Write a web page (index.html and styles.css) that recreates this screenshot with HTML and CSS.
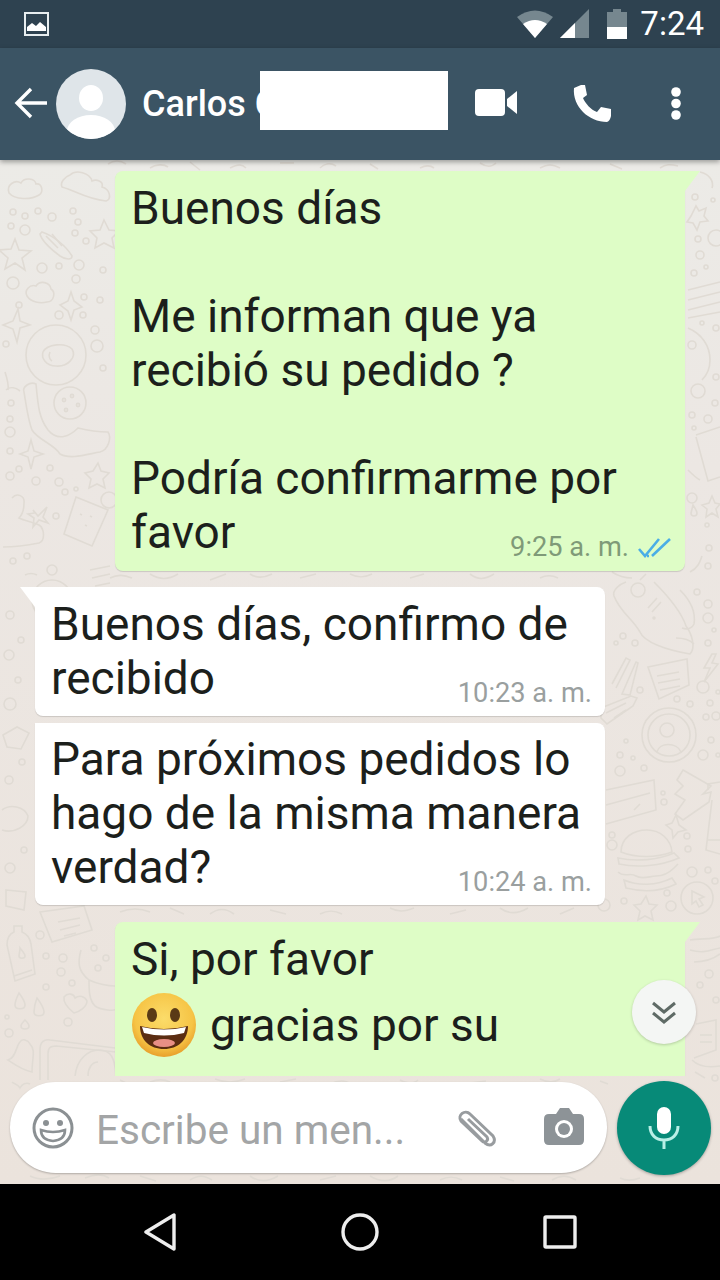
FILE: index.html
```html
<!DOCTYPE html>
<html lang="es">
<head>
<meta charset="utf-8">
<title>Chat</title>
<link rel="stylesheet" href="styles.css">
</head>
<body>
<div class="app">
  <div class="status">
    <svg class="st-img" width="25" height="24" viewBox="0 0 25 24"><rect x="1" y="1" width="23" height="22" fill="none" stroke="#e8eef0" stroke-width="2"/><path d="M3 19v-4l5-4 4 3 4-4 6 5v4z" fill="#fff"/></svg>
    <div class="st-right">
      <svg class="st-wifi" width="36" height="28" viewBox="0 0 36 28"><path d="M18 28 0 7Q18-6 36 7z" fill="#76878f"/><path d="M18 28 6 14Q18 6 30 14z" fill="#fff"/></svg>
      <svg width="30" height="30" viewBox="0 0 30 30"><path d="M0 29 29 0v29z" fill="#76878f"/><path d="M0 29 15 14v15z" fill="#fff"/></svg>
      <svg class="st-bat" width="20" height="30" viewBox="0 0 20 30"><path d="M0 3h6V0h8v3h6v27H0z" fill="#76878f"/><path d="M0 18h20v12H0z" fill="#fff"/></svg>
      <span class="clock">7:24</span>
    </div>
  </div>

  <header class="bar">
    <svg class="back" width="34" height="32" viewBox="0 0 34 32"><path d="M33 16H3M17 2 3 16l14 14" fill="none" stroke="#fff" stroke-width="3.4"/></svg>
    <svg class="avatar" width="70" height="70" viewBox="0 0 70 70"><defs><clipPath id="av"><circle cx="35" cy="35" r="35"/></clipPath></defs><circle cx="35" cy="35" r="35" fill="#dfe5e9"/><g clip-path="url(#av)"><ellipse cx="35" cy="29" rx="12" ry="13" fill="#fff"/><ellipse cx="35" cy="62" rx="24" ry="16" fill="#fff"/></g></svg>
    <div class="name-wrap">
      <span class="name">Carlos C</span>
      <span class="redact"></span>
    </div>
    <svg class="ic-video" width="42" height="28" viewBox="0 0 42 28"><rect x="0" y="0" width="30" height="27" rx="4" fill="#fff"/><path d="M32 10 42 2v23L32 17z" fill="#fff"/></svg>
    <svg class="ic-phone" width="38" height="37" viewBox="0 0 38 37"><path d="M8 0 1 3C0 12 4 21 10 27c6 6 15 10 24 10q3-1 4-6V24l-10-2-4 5C18 25 12 18 10 13l4-3L12 0z" fill="#fff"/></svg>
    <svg class="ic-dots" width="10" height="33" viewBox="0 0 10 33"><circle cx="5" cy="5" r="4.8" fill="#fff"/><circle cx="5" cy="16.5" r="4.8" fill="#fff"/><circle cx="5" cy="28" r="4.8" fill="#fff"/></svg>
  </header>

  <main class="chat">
    <svg class="wall" width="720" height="1024" viewBox="0 160 720 1024" aria-hidden="true">
      <defs>
        <linearGradient id="wg" x1="0" y1="0" x2="0" y2="1"><stop offset="0" stop-color="#ecebe7"/><stop offset=".3" stop-color="#ece7e3"/><stop offset="1" stop-color="#ebe3dc"/></linearGradient>
      </defs>
      <rect x="0" y="160" width="720" height="1024" fill="url(#wg)"/>
      <g fill="none" stroke="#e0dbd4" stroke-width="1.6">
        <!-- left column, top -->
        <path d="M9 193c-3-8 6-14 12-10 3-6 14-5 15 1 6-1 8 8 3 11-8 5-24 5-30-2z"/>
        <path d="M62 187c14 4 24 12 44 14 6-2 4-12-4-14 2-6-6-8-10-6-2-8-16-12-22-6-6 2-10 8-8 12z"/>
        <circle cx="13" cy="212" r="3"/><circle cx="25" cy="216" r="3"/><circle cx="38" cy="211" r="3"/><circle cx="52" cy="217" r="4"/><circle cx="73" cy="211" r="3"/><circle cx="78" cy="222" r="3"/>
        <circle cx="11" cy="226" r="3"/><circle cx="25" cy="230" r="5"/><circle cx="75" cy="233" r="3"/><circle cx="86" cy="241" r="3"/>
        <path d="M42 232c12 4 24 14 30 24 0 4-6 4-12 0-8-6-18-14-20-22z"/><path d="M46 236l12 12M52 234l10 12"/>
        <path d="m104 220 5 10 10 1-7 7 2 10-10-5-9 5 2-10-7-7 10-1z"/>
        <path d="m15 239 4 11 12 1-9 7 3 12-10-7-10 6 3-11-9-8 12-1z"/>
        <circle cx="42" cy="268" r="5"/><circle cx="59" cy="266" r="3"/><circle cx="79" cy="265" r="5"/><circle cx="103" cy="270" r="3"/>
        <circle cx="13" cy="283" r="6"/><circle cx="76" cy="279" r="4"/><circle cx="84" cy="297" r="3"/><circle cx="100" cy="300" r="3"/><circle cx="19" cy="305" r="3"/><circle cx="59" cy="315" r="4"/><circle cx="83" cy="315" r="3"/>
        <path d="M27 296c-3-6 3-12 9-10 4-6 14-4 15 3 5 3 3 13-4 13-7 2-16 0-20-6z"/>
        <path d="M60 305l8-4 3-9 3 9 8 6-8 3-3 10-3-9z"/>
        <path d="M3 325l10-4 5-12 2 12 10 4-10 3-3 14-4-13z"/>
        <circle cx="56" cy="355" r="30"/><path d="M43 352c4-8 22-10 29-3 5 8-4 18-16 17-10 0-15-8-13-14z"/><path d="M50 352c-2 4 0 8 2 9"/>
        <circle cx="6" cy="344" r="3"/><circle cx="95" cy="330" r="4"/><circle cx="97" cy="346" r="6"/><circle cx="103" cy="368" r="3"/>
        <path d="M6 390c4-4 10-2 14 1M5 372c2 6 4 12 3 18"/>
        <path d="M24 392c-2-5 6-11 12-8 2 22 3 34 12 46 10 12 22 6 30-2 8 2 20 4 30 4 4 6 0 18-8 20-12 2-30 8-40 2-6-10-22-14-28-24-4-10-6-26-8-38z"/>
        <circle cx="70" cy="403" r="16"/><circle cx="64" cy="400" r="1.6"/><circle cx="72" cy="396" r="1.6"/><circle cx="78" cy="405" r="1.6"/><circle cx="66" cy="410" r="1.6"/>
        <circle cx="11" cy="403" r="3"/><circle cx="10" cy="419" r="3"/><circle cx="10" cy="432" r="5"/><circle cx="10" cy="451" r="3"/>
        <path d="m20 454 8-3 3-11 3 11 9 3-9 3-3 12-3-12z"/>
        <circle cx="19" cy="469" r="3"/><circle cx="50" cy="468" r="3"/><circle cx="10" cy="476" r="4"/><circle cx="36" cy="481" r="4"/><circle cx="59" cy="482" r="4"/><circle cx="65" cy="492" r="3"/><circle cx="76" cy="489" r="2"/>
        <path d="m98 463 3 8 8 2-6 6 2 9-8-4-8 4 2-9-6-6 8-2z"/>
        <path d="M12 498c5-6 13-2 12 5 0 6-1 11-5 15 6 3 14 4 20 7 6 4 6 16 0 18-10 2-28 4-36 4"/>
        <path d="M33 510l5 6 9-9-4 10 5 6-9-3-6 7 1-9-6-4 7-1z"/>
        <circle cx="56" cy="516" r="3"/><circle cx="13" cy="561" r="3"/><circle cx="27" cy="556" r="3"/>
        <path d="M76 497 108 510 92 546 64 534z"/><path d="M80 514l2 1M90 516l2 1M85 525l2 1"/><circle cx="109" cy="500" r="8"/>
        <circle cx="52" cy="570" r="5"/><circle cx="52" cy="600" r="20"/><path d="M90 570l20-4M92 578l18-4M95 586l15-3"/>
        <!-- left strip middle -->
        <circle cx="10" cy="615" r="4"/><circle cx="21" cy="640" r="3"/><circle cx="9" cy="655" r="5"/><circle cx="18" cy="680" r="3"/><circle cx="10" cy="704" r="6"/><path d="M3 735l14-8 12 6-8 16-14-2z"/><circle cx="22" cy="762" r="3"/><circle cx="9" cy="780" r="4"/><path d="M2 810c8-6 22-4 26 6 0 10-14 18-26 14"/><circle cx="24" cy="850" r="3"/><circle cx="10" cy="868" r="5"/><path d="M6 890l20 2-2 18-18-4z"/>
        <path d="M40 912l44-6 8 24-40 12z"/><path d="M58 922l22-4M60 930l20-5M64 936l12-3"/><path d="M40 905c-2-5 4-6 8-4"/>
        <!-- left bottom -->
        <path d="M14 926h8v6c5 2 8 6 9 12l4 30-20 7-8-36c0-6 2-11 7-13z"/><path d="m20 948c3 4 5 6 5 8 0 3-6 3-6 0 0-2 1-5 1-8z"/><path d="M14 976l18-6"/>
        <circle cx="40" cy="935" r="4"/><circle cx="46" cy="956" r="3"/><circle cx="63" cy="958" r="4"/><circle cx="61" cy="972" r="4"/><circle cx="72" cy="983" r="3"/><circle cx="46" cy="987" r="3"/><circle cx="94" cy="948" r="3"/><circle cx="106" cy="958" r="3"/><circle cx="98" cy="968" r="3"/>
        <path d="M64 997c4-5 10-3 11 1 4-3 10-2 12 3 0 6-8 11-13 12-5-4-11-10-10-16z"/>
        <path d="M81 950c-4 14-2 22 8 30 8 4 20 6 26 6M89 980c0 10 0 20 6 26 6 4 20 6 24 2"/>
        <path d="M19 993c3 4 6 8 6 12 0 5-10 5-10 0 0-4 2-8 4-12z"/><path d="M37 998c3 4 7 10 7 14 0 5-10 5-10 0 0-4 1-9 3-14z"/><path d="M25 1020c2 2 4 4 4 6 0 4-8 4-8 0 0-2 2-4 4-6z"/>
        <circle cx="7" cy="1017" r="2"/><circle cx="9" cy="1033" r="4"/><circle cx="68" cy="1022" r="4"/>
        <path d="M8 1060c8-2 8-14 12-18 2-4 8-2 10 2 6 6 2 14 2 28-10-2-18-8-24-12z"/>
        <path d="M40 1080v-30c0-8 4-11 10-10l65 8M48 1080v-26c0-6 2-8 8-8l60 6"/>
        <path d="M75 1076c2-18 14-26 24-26 12 0 16 8 17 26"/><path d="M88 1076c0-8 4-14 10-14"/>
        <path d="M12 1082c2 2 6 2 8 6 2-4 6-6 10-4"/>
        <!-- top strip -->
        <path d="M108 164c6-4 12-4 18 0M150 168c6-4 14-4 18-1M190 162l10 8M230 168c8-4 12-4 16 0M280 163h14M320 168c4-4 10-6 16-2M370 164l8 5M420 168c6-3 10-3 14 0M480 163c6 4 12 4 16 0M540 168c8-4 12-4 20 0M610 164l12 5M660 168c6-4 10-4 18-2"/>
        <!-- top right -->
        <path d="M700 172c10 2 14 10 12 16"/>
        <circle cx="695" cy="197" r="3"/><circle cx="713" cy="200" r="2"/>
        <path d="m696 206 3 5 7-3-2 8 4 5-8 1-3 8-4-7-6-1 4-6z"/><circle cx="698" cy="239" r="3"/><circle cx="716" cy="238" r="8"/>
        <circle cx="700" cy="255" r="4"/><circle cx="706" cy="267" r="2"/><circle cx="694" cy="273" r="3"/>
        <path d="M688 290l32-8M688 300l32-8M688 310l32-8M688 318l32-6"/>
        <circle cx="702" cy="323" r="2"/><circle cx="716" cy="328" r="3"/>
        <path d="M688 328c14 6 22 18 22 32 0 6-2 14-8 20"/><circle cx="692" cy="345" r="4"/><circle cx="698" cy="391" r="7"/>
        <circle cx="716" cy="377" r="3"/><circle cx="715" cy="403" r="3"/><circle cx="692" cy="415" r="3"/><circle cx="708" cy="419" r="4"/><circle cx="694" cy="428" r="2"/>
        <path d="M696 435l24-8M696 437l12 44 12-4"/><path d="M688 470c4 4 8 8 12 10"/>
        <circle cx="692" cy="498" r="5"/><path d="m712 496 3 7 5 1-4 5 2 8-6-4-6 4 1-8-5-4 7-2z"/>
        <path d="M693 505c2 3 4 6 4 8 0 4-6 4-6 0z"/><circle cx="707" cy="525" r="2"/><circle cx="709" cy="548" r="3"/><path d="M690 572c8-4 10-10 12-16"/><circle cx="708" cy="566" r="3"/>
        <!-- right column middle -->
        <path d="M626 582c-6 2-14 8-12 14 6 16 18 22 26 36 4 10 26 18 50 22 6-6 2-20-4-28-4-12-14-26-32-44"/>
        <circle cx="638" cy="590" r="7"/><path d="M648 608l9-10M652 612l9-10"/><circle cx="654" cy="618" r="1"/>
        <path d="M680 590c10 10 16 22 14 34-2 4-6 6-12 4M676 638c6 0 14 2 18 6"/>
        <circle cx="697" cy="592" r="3"/><circle cx="708" cy="604" r="4"/><circle cx="708" cy="618" r="5"/><circle cx="714" cy="630" r="2"/><circle cx="708" cy="643" r="3"/>
        <circle cx="623" cy="636" r="3"/><circle cx="635" cy="643" r="3"/><circle cx="616" cy="643" r="2"/>
        <path d="M612 684l14-26 4 2-14 28M622 694l14-32 2 1-8 32z"/>
        <path d="M648 667l39-8 2 26-30 14z"/><path d="M657 676l22-4M658 683l22-4M660 690l20-4"/>
        <path d="m712 654-8 14 6 0-6 14 14-18-6-1 4-9z"/><circle cx="703" cy="687" r="6"/><circle cx="718" cy="692" r="2"/><circle cx="640" cy="690" r="3"/>
        <circle cx="677" cy="699" r="3"/><circle cx="690" cy="704" r="3"/><circle cx="710" cy="703" r="3"/>
        <path d="M601 708l30-12 6 2-4 8-26 18-6-6z"/><path d="M606 713l20-10M614 718l12-8"/>
        <circle cx="669" cy="735" r="27"/><circle cx="669" cy="735" r="21"/><circle cx="667" cy="730" r="7"/><path d="M657 752c2-10 20-10 24 0"/>
        <circle cx="706" cy="717" r="3"/><circle cx="716" cy="716" r="4"/><circle cx="711" cy="740" r="3"/><circle cx="703" cy="755" r="5"/><circle cx="718" cy="755" r="2"/>
        <circle cx="626" cy="741" r="2"/><circle cx="620" cy="755" r="3"/><circle cx="633" cy="758" r="2"/><circle cx="620" cy="771" r="5"/><circle cx="644" cy="768" r="3"/>
        <path d="M606 790l48-10 2 30-50 14M606 805l44-12"/><path d="M634 810l6-6"/>
        <path d="M683 770l28 16-8 8 8-2-2 10-26 18-8-6 10-14-10-6 8-8-6-6z"/>
        <path d="M708 790v-6l12-2M712 800l-6 50 14 4M708 840l12 0"/>
        <path d="m676 815-4 8-6 2 6 5 1 8 5-6 8-2-7-5z"/><circle cx="663" cy="793" r="2"/><circle cx="664" cy="802" r="3"/><circle cx="687" cy="836" r="3"/><circle cx="688" cy="849" r="3"/>
        <path d="M621 852c0-14 12-22 26-22s24 10 25 22c-16 6-36 6-51 0z"/><path d="M618 858c18 4 40 2 56-5l5 5c-18 8-42 10-60 6zM618 872c6 6 12 0 18 4s14 0 20 0 12-2 18-8l4-4M624 880c14 6 32 6 48-2l4 6c-16 8-34 8-50 4z"/>
        <circle cx="612" cy="845" r="5"/><circle cx="612" cy="835" r="3"/>
        <circle cx="692" cy="872" r="5"/><circle cx="708" cy="870" r="3"/><circle cx="715" cy="881" r="3"/><circle cx="667" cy="893" r="3"/>
        <circle cx="604" cy="905" r="6"/><circle cx="624" cy="901" r="3"/><path d="m646 896 3 8 8 1-6 6 2 9-8-4-7 4 2-9-6-6 7-1z"/><circle cx="671" cy="906" r="5"/>
        <circle cx="697" cy="898" r="16"/><path d="m692 891 12 6-5 2 4 6-4 2-3-6-4 3z"/>
        <!-- right column bottom -->
        <path d="M690 940c12-2 24 0 30-4M690 950c14 4 20 0 30-2M694 962c8 0 18-2 26-8"/>
        <path d="M696 1024l20-4v30l-22 8"/><path d="M700 1035h12M700 1042h12"/><circle cx="700" cy="985" r="3"/><circle cx="709" cy="974" r="4"/><circle cx="716" cy="1000" r="3"/>
        <path d="M692 1060c6 6 16 8 28 6M695 1072l10 6"/><circle cx="715" cy="1078" r="3"/>
        <!-- strips -->
        <path d="M120 1080l8 4M150 1082c8-3 14-3 20 0M215 1079c10 4 20 4 30 0M280 1082l16-3M330 1084c8-4 16-4 20 0M400 1080c6 4 14 4 18 0M470 1083l16-2M540 1079c8 4 14 4 20 0M600 1081l8 3"/>
        <path d="M30 1176c8 4 20 4 30 0M85 1178c10-4 18-4 24 0M140 1176l16 5M190 1180c8-5 14-5 22 0M250 1176c8 6 18 6 28 0M320 1180l16-4M370 1176c10 6 20 6 28 0M440 1180c8-4 14-4 22 0M500 1177l14 4M552 1180c8-5 16-5 24 0M620 1178c6 3 12 3 20 0"/>
        <path d="M612 572c6 4 12 6 20 6M640 580l6-6M25 575c4-2 8-2 12 0M110 578c8-4 14-3 22 0M150 574c10 6 18 6 28 0M210 580l16-6M250 574c6 4 14 4 22 0M300 578l16-4M350 574c8 4 14 4 22 0M410 578l14-4M470 574c8 6 14 6 24 0M540 578c6-3 12-3 18 0"/>
        <path d="M120 912c10-4 20-4 30 0M170 908l14 6M210 914c8-6 16-6 24 0M270 910l16 4M320 914c8-4 14-4 22 0M390 908c8 4 14 4 24 0M450 914l16-4M500 908c8 6 18 6 28 0M560 914l14-6"/>
      </g>
    </svg>

    <div class="list">
      <article class="bubble out first">
        <p>Buenos días</p>
        <p class="blank">&nbsp;</p>
        <p>Me informan que ya</p>
        <p>recibió su pedido ?</p>
        <p class="blank">&nbsp;</p>
        <p>Podría confirmarme por</p>
        <p>favor</p>
        <div class="meta">9:25 a. m.
          <svg class="ticks" width="34" height="21" viewBox="0 0 34 21"><path d="M1 12l6 7L21 2M14 19 32 2M9 19l2 0" fill="none" stroke="#4aaee6" stroke-width="2.6"/></svg>
        </div>
      </article>

      <article class="bubble in second">
        <p>Buenos días, confirmo de</p>
        <p>recibido</p>
        <div class="meta">10:23 a. m.</div>
      </article>

      <article class="bubble in third">
        <p>Para próximos pedidos lo</p>
        <p>hago de la misma manera</p>
        <p>verdad?</p>
        <div class="meta">10:24 a. m.</div>
      </article>

      <article class="bubble out fourth">
        <p>Si, por favor</p>
        <div class="emoji-line">
          <svg width="66" height="66" viewBox="0 0 66 66">
            <defs><radialGradient id="face" cx=".5" cy=".4" r=".6"><stop offset="0" stop-color="#fbdc6a"/><stop offset=".75" stop-color="#f6c445"/><stop offset="1" stop-color="#e89f2c"/></radialGradient></defs>
            <circle cx="33" cy="33" r="32" fill="url(#face)"/>
            <ellipse cx="21" cy="23" rx="5" ry="7" fill="#5a3a16"/><ellipse cx="44" cy="23" rx="5" ry="7" fill="#5a3a16"/>
            <path d="M9 34q24 6 48 0c0 14-10 23-24 23S9 48 9 34z" fill="#5b2d12"/>
            <path d="M11 35q22 5 44 0l-2 6q-20 5-40 0z" fill="#fff"/>
            <ellipse cx="33" cy="51" rx="11" ry="4" fill="#e88f85"/>
          </svg>
          <span>gracias por su</span>
        </div>
      </article>
    </div>

    <button class="scroll-down" aria-label="Bajar">
      <svg width="26" height="25" viewBox="0 0 26 25"><path d="M2 3l11 9 11-9M2 13l11 9 11-9" fill="none" stroke="#5f6b66" stroke-width="3"/></svg>
    </button>

    <div class="composer">
      <div class="pill">
        <svg class="ic-smile" width="42" height="42" viewBox="0 0 42 42"><circle cx="21" cy="21" r="19" fill="none" stroke="#8b9093" stroke-width="3"/><circle cx="14" cy="16" r="3" fill="#8b9093"/><circle cx="28" cy="16" r="3" fill="#8b9093"/><path d="M9 23q12 4 24 0 0 10-12 11-12-1-12-11z" fill="none" stroke="#8b9093" stroke-width="2.6"/></svg>
        <span class="placeholder">Escribe un men...</span>
        <svg class="ic-clip" width="44" height="40" viewBox="0 0 44 40"><path d="M6 10 30 34c6 5 12-1 8-7L15 5C10 0 2 6 6 12l21 20c3 3 7-1 5-4L13 10" fill="none" stroke="#989c9f" stroke-width="3"/></svg>
        <svg class="ic-cam" width="40" height="37" viewBox="0 0 40 37"><path d="M5 6h7l4-6h9l4 6h6q5 0 5 5v21q0 5-5 5H5q-5 0-5-5V11q0-5 5-5z" fill="#8d9397"/><circle cx="20" cy="21" r="9" fill="#fff"/><circle cx="20" cy="21" r="6" fill="#8d9397"/></svg>
      </div>
      <button class="mic" aria-label="Micrófono">
        <svg width="32" height="42" viewBox="0 0 32 42"><rect x="9" y="0" width="14" height="27" rx="7" fill="#fff"/><path d="M2 19c0 9 6 14 14 14s14-5 14-14M16 33v9" fill="none" stroke="#b9efe6" stroke-width="3"/></svg>
      </button>
    </div>
  </main>

  <nav class="nav">
    <svg width="34" height="38" viewBox="0 0 34 38"><path d="M31 2v34L3 19z" fill="none" stroke="#eee" stroke-width="3.4" stroke-linejoin="round"/></svg>
    <svg width="38" height="38" viewBox="0 0 38 38"><circle cx="19" cy="19" r="17" fill="none" stroke="#eee" stroke-width="3.4"/></svg>
    <svg width="34" height="34" viewBox="0 0 34 34"><rect x="2" y="2" width="30" height="30" rx="1" fill="none" stroke="#eee" stroke-width="3.4"/></svg>
  </nav>
</div>
</body>
</html>
```
FILE: styles.css
```css
* { box-sizing: border-box; }
html, body { margin: 0; padding: 0; }
body { font-family: Roboto, "Liberation Sans", sans-serif; background: #000; }
svg { display: block; flex: none; }
p { margin: 0; }

.app { width: 720px; height: 1280px; display: flex; flex-direction: column; overflow: hidden; }

.status { height: 48px; background: #2e4250; display: flex; align-items: center; justify-content: space-between; padding: 0 16px 0 24px; }
.st-right { display: flex; align-items: center; gap: 8px; }
.st-wifi { margin-right: -1px; }
.st-bat { margin-left: 9px; }
.clock { color: #fff; font-size: 33px; margin-left: 5px; line-height: 48px; }

.bar { height: 112px; background: #3b5464; display: flex; align-items: center; padding: 0 39px 2px 14px; box-shadow: 0 2px 5px rgba(0,0,0,.35); position: relative; z-index: 2; flex: none; }
.back { margin-right: 8px; }
.avatar { margin-top: 1px; }
.name-wrap { display: flex; align-items: center; margin-left: 16px; width: 306px; height: 60px; position: relative; padding-top: 2px; }
.name { color: #fff; font-size: 36px; font-weight: 500; white-space: nowrap; }
.redact { position: absolute; left: 118px; top: -2px; width: 188px; height: 59px; background: #fff; }
.ic-video { margin-left: 27px; }
.ic-phone { margin-left: 56px; }
.ic-dots { margin-left: 60px; }

.chat { flex: 1; position: relative; display: flex; flex-direction: column; min-height: 0; }
.wall { position: absolute; left: 0; top: 0; }
.list { flex: 1; min-height: 0; overflow: hidden; padding-top: 11px; display: flex; flex-direction: column; position: relative; }

.bubble { width: 570px; flex: none; position: relative; font-size: 46px; line-height: 54px; color: #1c1f1c; padding: 10px 16px 10px; border-radius: 8px; box-shadow: 0 1px 1px rgba(0,0,0,.14); }
.bubble.out { background: #defdc6; margin-left: 115px; border-top-right-radius: 0; }
.bubble.in { background: #fff; margin-left: 35px; border-top-left-radius: 0; }
.bubble.out.first::after, .bubble.out.fourth::after { content: ""; position: absolute; left: 100%; top: 0; width: 15px; height: 20px; background: #defdc6; clip-path: polygon(0 0, 100% 0, 0 100%); }
.bubble.in.second::after { content: ""; position: absolute; right: 100%; top: 0; width: 15px; height: 20px; background: #fff; clip-path: polygon(0 0, 100% 0, 100% 100%); }
.first { padding-bottom: 12px; }
.second { margin-top: 16px; padding-bottom: 11px; }
.third { margin-top: 7px; padding-top: 9px; padding-bottom: 11px; }
.fourth { margin-top: 17px; padding-bottom: 30px; }

.meta { position: absolute; right: 13px; bottom: 5px; display: flex; align-items: center; gap: 9px; font-size: 27.2px; line-height: 36px; color: #9a9f9f; }
.bubble.out .meta { color: #7f9a78; bottom: 6px; }

.emoji-line { display: flex; align-items: center; gap: 13px; height: 78px; }

.scroll-down { position: absolute; left: 632px; top: 820px; width: 64px; height: 64px; border: 0; padding: 0; border-radius: 50%; background: #f4f6f4; box-shadow: 0 1px 3px rgba(0,0,0,.2); display: flex; align-items: center; justify-content: center; }

.composer { flex: none; height: 108px; display: flex; align-items: flex-start; padding: 6px 9px 0 10px; position: relative; justify-content: space-between; }
.pill { width: 597px; height: 91px; border-radius: 46px; background: #fff; box-shadow: 0 1px 2px rgba(0,0,0,.25); display: flex; align-items: center; padding-left: 22px; }
.placeholder { font-size: 40.5px; color: #a3a5a6; margin-left: 22px; width: 360px; white-space: nowrap; padding-top: 5px; }
.ic-clip { margin-top: 2px; margin-left: -1px; }
.ic-cam { margin-left: 45px; margin-top: -2px; }
.mic { width: 94px; height: 94px; margin-top: -1px; border: 0; padding: 0; border-radius: 50%; background: #078a78; box-shadow: 0 1px 3px rgba(0,0,0,.3); display: flex; align-items: center; justify-content: center; }

.nav { height: 96px; flex: none; background: #000; display: grid; grid-template-columns: repeat(3, 200px); justify-content: center; justify-items: center; align-items: center; }
```
